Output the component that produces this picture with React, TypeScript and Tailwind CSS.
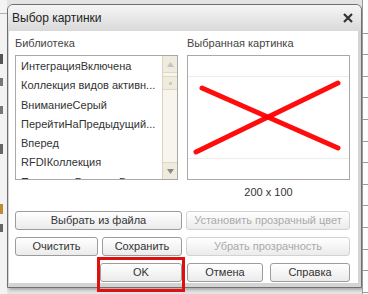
import React from 'react';

const items = [
  'ИнтеграцияВключена',
  'Коллекция видов активн...',
  'ВниманиеСерый',
  'ПерейтиНаПредыдущий...',
  'Вперед',
  'RFDIКоллекция',
  'ПомощникБазовыеВерси',
];

function Btn({ children, disabled, className = '' }: { children: React.ReactNode; disabled?: boolean; className?: string }) {
  return (
    <div
      className={`flex items-center justify-center rounded-[3px] border bg-linear-to-b from-white to-[#ebebeb] text-[11px] leading-none ${
        disabled ? 'border-[#d2d2d2] text-[#aaaaaa]' : 'border-[#9c9c9c] text-[#333333]'
      } ${className}`}
    >
      {children}
    </div>
  );
}

function ScrollBar() {
  return (
    <div className="flex w-[15px] flex-col border-l border-[#d8d4c0] bg-[#f7f5ec]">
      <div className="flex h-[17px] items-center justify-center border-b border-[#ddd9c6] bg-[#efecdf]">
        <svg width="7" height="5" viewBox="0 0 7 5">
          <path d="M3.5 0 L7 5 L0 5 Z" fill="#c4c4c4" />
        </svg>
      </div>
      <div className="mt-[3px] flex h-[14px] items-center justify-center border-y border-[#ddd9c6] bg-[#efecdf]">
        <div className="h-[3px] w-[3px] bg-[#d0ccbb]" />
      </div>
      <div className="flex-1" />
      <div className="flex h-[17px] items-center justify-center border-t border-[#ddd9c6] bg-[#efecdf]">
        <svg width="7" height="5" viewBox="0 0 7 5">
          <path d="M0 0 L7 0 L3.5 5 Z" fill="#8a8a8a" />
        </svg>
      </div>
    </div>
  );
}

export default function App() {
  return (
    <div
      className="flex h-[294px] w-[368px] overflow-hidden bg-[#e4e4e4]"
      style={{ fontFamily: '"Liberation Sans", Arial, sans-serif' }}
    >
      {/* window behind, left */}
      <div className="flex w-[7px] flex-col bg-[#f3f3f3]">
        <div className="h-[14px] border-b border-[#b0b0b0]" />
        <div className="mt-[40px] h-[10px] w-[3px] bg-[#555]" />
        <div className="mt-[14px] h-[8px] w-[3px] bg-[#777]" />
        <div className="mt-[20px] h-[8px] w-[3px] bg-[#777]" />
        <div className="mt-[30px] h-[10px] w-[3px] bg-[#666]" />
        <div className="mt-[50px] h-[10px] w-[3px] bg-[#c08a30]" />
        <div className="mt-[10px] h-[8px] w-[3px] bg-[#666]" />
      </div>

      {/* dialog */}
      <div className="mt-[4px] flex h-[284px] w-[355px] flex-col rounded-t-[6px] border border-[#707070] bg-[#d4d4d4] shadow-[2px_2px_3px_rgba(0,0,0,0.25)]">
        <div className="flex h-[26px] items-center justify-between rounded-t-[5px] bg-linear-to-b from-[#f6f6f6] to-[#d9d9d9] pl-[4px] pr-[8px]">
          <span className="text-[12px] text-[#222]">Выбор картинки</span>
          <svg width="10" height="10" viewBox="0 0 10 10">
            <path d="M1 1 L9 9 M9 1 L1 9" stroke="#333" strokeWidth="2.2" />
          </svg>
        </div>
        <div className="ml-[1px] mr-[3px] mb-[4px] flex flex-1 flex-col bg-white pl-[6px] pr-[8px] pt-[6px]">
          <div className="flex gap-[9px]">
            <div className="flex w-[163px] flex-col">
              <div className="h-[13px] text-[11px] leading-[13px] text-[#444]">Библиотека</div>
              <div className="mt-[5px] flex h-[125px] overflow-hidden border border-[#a8a8a8]">
                <div className="flex-1 overflow-hidden pl-[5px] pt-[1px]">
                  {items.map((t) => (
                    <div key={t} className="h-[19.3px] whitespace-nowrap text-[11px] leading-[19px] text-[#333]">
                      {t}
                    </div>
                  ))}
                </div>
                <ScrollBar />
              </div>
            </div>
            <div className="flex w-[163px] flex-col">
              <div className="h-[13px] text-[11px] leading-[13px] text-[#444]">Выбранная картинка</div>
              <div className="mt-[5px] h-[125px] border border-[#a8a8a8]">
                <svg width="161" height="123" viewBox="0 0 161 123">
                  <line x1="0" y1="20.5" x2="161" y2="20.5" stroke="#ececec" />
                  <line x1="0" y1="102.5" x2="161" y2="102.5" stroke="#ececec" />
                  <path d="M14 32 L150 92" stroke="#ff0000" strokeWidth="5" strokeLinecap="round" opacity="0.95" />
                  <path d="M150 27 L8 96" stroke="#ff0000" strokeWidth="5" strokeLinecap="round" opacity="0.95" />
                </svg>
              </div>
              <div className="mt-[5px] text-center text-[11px] leading-[14px] text-[#333]">200 x 100</div>
            </div>
          </div>

          <div className="mt-[12px] flex gap-[4px]">
            <Btn className="h-[19px] w-[167px]">Выбрать из файла</Btn>
            <Btn disabled className="h-[19px] w-[164px]">Установить прозрачный цвет</Btn>
          </div>
          <div className="mt-[7px] flex gap-[4px]">
            <Btn className="h-[19px] w-[83px]">Очистить</Btn>
            <Btn className="h-[19px] w-[80px]">Сохранить</Btn>
            <Btn disabled className="h-[19px] w-[164px]">Убрать прозрачность</Btn>
          </div>
          <div className="mt-[7px] flex">
            <div className="relative ml-[85px]">
              <Btn className="h-[19px] w-[82px]">OK</Btn>
              <div className="absolute left-[-3px] top-[-6px] h-[35px] w-[88px] border-[3px] border-[#e01010]" />
            </div>
            <Btn className="ml-[5px] h-[19px] w-[76px]">Отмена</Btn>
            <Btn className="ml-[7px] h-[19px] w-[80px]">Справка</Btn>
          </div>
        </div>
      </div>

      {/* window behind, right */}
      <div className="flex flex-1 flex-col border-l border-[#9a9a9a] bg-white pt-[12px]">
        {Array.from({ length: 13 }).map((_, i) => (
          <div key={i} className="h-[21.6px] border-b border-[#9a9a9a]" />
        ))}
      </div>
    </div>
  );
}
